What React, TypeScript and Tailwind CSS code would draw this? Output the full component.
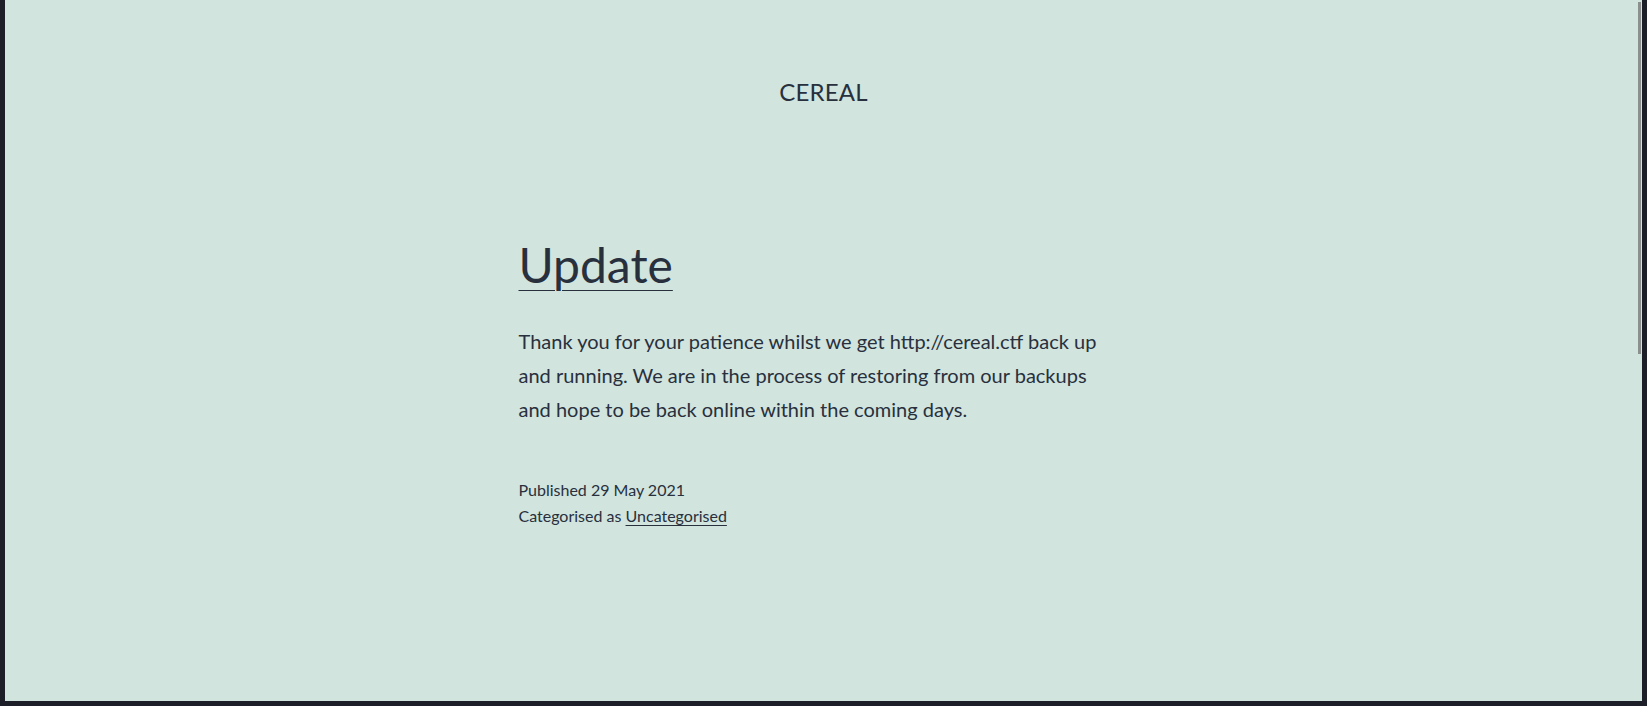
const App = () => {
  return (
    <div className="h-screen w-full bg-[#1c1f27] pl-[5px] pr-[5px] pb-[5px] flex">
      <div className="relative flex-1 bg-[#d1e4dd] text-[#28303d] font-['Lato',sans-serif] overflow-hidden">
        {/* Site header */}
        <header className="pt-[80px] text-center">
          <a href="#" className="text-[24px] leading-none uppercase tracking-[0.2px]">
            Cereal
          </a>
        </header>

        {/* Post */}
        <main className="mx-auto w-[610px] pt-[127px]">
          <h2 className="text-[48px] leading-[1.3]">
            <a href="#" className="underline decoration-1 underline-offset-[7px]">
              Update
            </a>
          </h2>
          <p className="mt-[28px] max-w-[590px] text-[20px] leading-[34px]">
            Thank you for your patience whilst we get http://cereal.ctf back up and running. We are in the process of
            restoring from our backups and hope to be back online within the coming days.
          </p>
          <footer className="mt-[51px] text-[16px] leading-[26px]">
            <div>Published 29 May 2021</div>
            <div>
              Categorised as{" "}
              <a href="#" className="underline decoration-1 underline-offset-[3px]">
                Uncategorised
              </a>
            </div>
          </footer>
        </main>

        {/* overlay scrollbar */}
        <div className="absolute right-[1px] top-[2px] h-[352px] w-[3px] bg-[#8b908e]" />
      </div>
    </div>
  );
};

export default App;
